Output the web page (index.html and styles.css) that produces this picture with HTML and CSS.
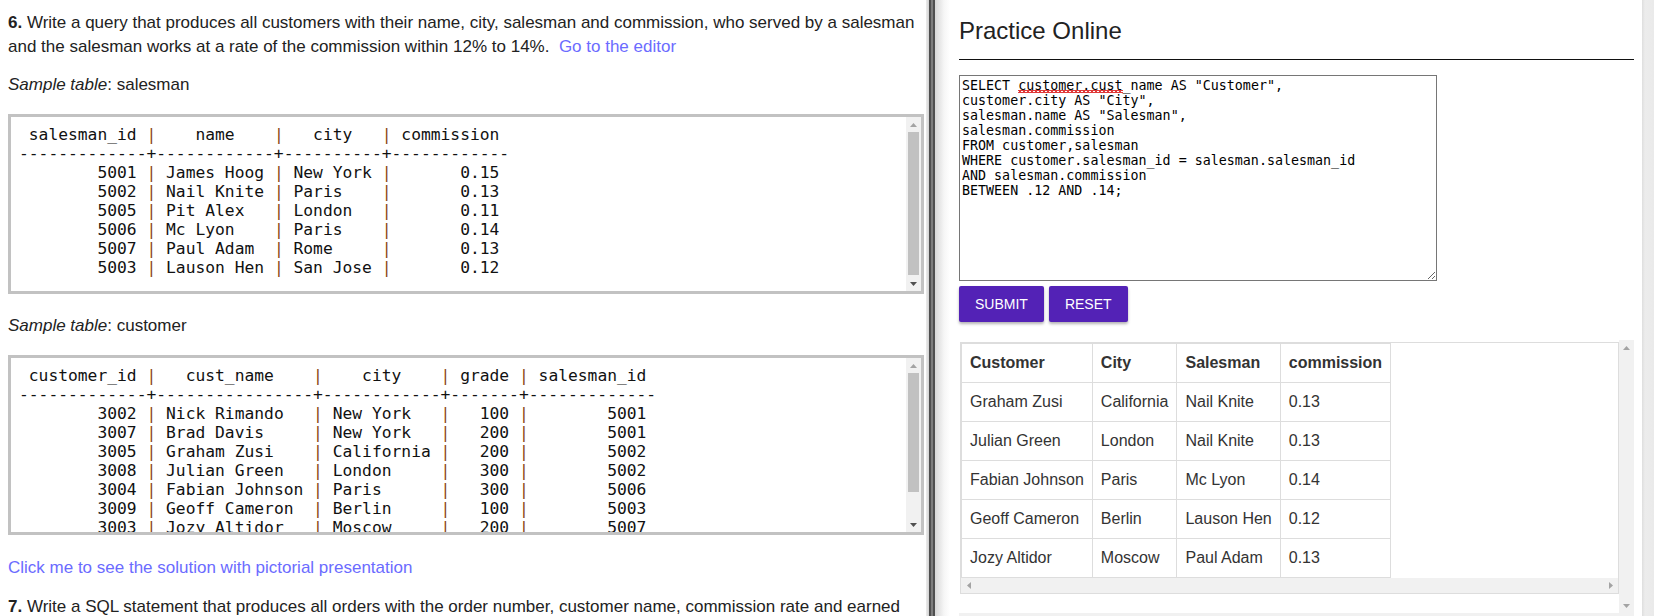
FILE: index.html
```html
<!DOCTYPE html>
<html lang="en">
<head>
<meta charset="utf-8">
<title>SQL exercise</title>
<link rel="stylesheet" href="styles.css">
</head>
<body>
<div class="page">
  <main class="left">
    <p class="q"><b>6.</b> Write a query that produces all customers with their name, city, salesman and commission, who served by a salesman and the salesman works at a rate of the commission within 12% to 14%.&nbsp; <a href="#" class="lnk">Go to the editor</a></p>
    <p class="sample first"><i>Sample table</i>: salesman</p>
    <div class="tbl-box">
      <pre class="tbl"> salesman_id <span class="p">|</span>    name    <span class="p">|</span>   city   <span class="p">|</span> commission
-------------+------------+----------+------------
        5001 <span class="p">|</span> James Hoog <span class="p">|</span> New York <span class="p">|</span>       0.15
        5002 <span class="p">|</span> Nail Knite <span class="p">|</span> Paris    <span class="p">|</span>       0.13
        5005 <span class="p">|</span> Pit Alex   <span class="p">|</span> London   <span class="p">|</span>       0.11
        5006 <span class="p">|</span> Mc Lyon    <span class="p">|</span> Paris    <span class="p">|</span>       0.14
        5007 <span class="p">|</span> Paul Adam  <span class="p">|</span> Rome     <span class="p">|</span>       0.13
        5003 <span class="p">|</span> Lauson Hen <span class="p">|</span> San Jose <span class="p">|</span>       0.12
</pre>
      <div class="vbar">
        <span class="arrow dis"><svg width="7" height="4" viewBox="0 0 7 4"><polygon points="0,4 7,4 3.5,0"/></svg></span>
        <span class="track"><span class="thumb" style="height:143px"></span></span>
        <span class="arrow"><svg width="7" height="4" viewBox="0 0 7 4"><polygon points="0,0 7,0 3.5,4"/></svg></span>
      </div>
    </div>
    <p class="sample second"><i>Sample table</i>: customer</p>
    <div class="tbl-box">
      <pre class="tbl"> customer_id <span class="p">|</span>   cust_name    <span class="p">|</span>    city    <span class="p">|</span> grade <span class="p">|</span> salesman_id
-------------+----------------+------------+-------+-------------
        3002 <span class="p">|</span> Nick Rimando   <span class="p">|</span> New York   <span class="p">|</span>   100 <span class="p">|</span>        5001
        3007 <span class="p">|</span> Brad Davis     <span class="p">|</span> New York   <span class="p">|</span>   200 <span class="p">|</span>        5001
        3005 <span class="p">|</span> Graham Zusi    <span class="p">|</span> California <span class="p">|</span>   200 <span class="p">|</span>        5002
        3008 <span class="p">|</span> Julian Green   <span class="p">|</span> London     <span class="p">|</span>   300 <span class="p">|</span>        5002
        3004 <span class="p">|</span> Fabian Johnson <span class="p">|</span> Paris      <span class="p">|</span>   300 <span class="p">|</span>        5006
        3009 <span class="p">|</span> Geoff Cameron  <span class="p">|</span> Berlin     <span class="p">|</span>   100 <span class="p">|</span>        5003
        3003 <span class="p">|</span> Jozy Altidor   <span class="p">|</span> Moscow     <span class="p">|</span>   200 <span class="p">|</span>        5007
        3001 <span class="p">|</span> Brad Guzan     <span class="p">|</span> London     <span class="p">|</span>       <span class="p">|</span>        5005
</pre>
      <div class="vbar">
        <span class="arrow dis"><svg width="7" height="4" viewBox="0 0 7 4"><polygon points="0,4 7,4 3.5,0"/></svg></span>
        <span class="track"><span class="thumb" style="height:119px"></span></span>
        <span class="arrow"><svg width="7" height="4" viewBox="0 0 7 4"><polygon points="0,0 7,0 3.5,4"/></svg></span>
      </div>
    </div>
    <p class="solution"><a href="#" class="lnk">Click me to see the solution with pictorial presentation</a></p>
    <p class="q next"><b>7.</b> Write a SQL statement that produces all orders with the order number, customer name, commission rate and earned commission amount for those customers who carry their grade is 200 or more and served by an existing salesman.</p>
  </main>

  <div class="divider"></div>

  <section class="right">
    <h2 class="title">Practice Online</h2>
    <hr class="rule">
    <div class="editor">SELECT <span class="typo">customer.cust</span>_name AS "Customer",
customer.city AS "City",
salesman.name AS "Salesman",
salesman.commission
FROM customer,salesman
WHERE customer.salesman_id = salesman.salesman_id
AND salesman.commission
BETWEEN .12 AND .14;</div>
    <div class="btns">
      <button class="btn" type="button">SUBMIT</button>
      <button class="btn" type="button">RESET</button>
    </div>
    <div class="result">
      <div class="result-view">
        <div class="resp">
          <table class="res-table">
            <tr><th>Customer</th><th>City</th><th>Salesman</th><th>commission</th></tr>
            <tr><td>Graham Zusi</td><td>California</td><td>Nail Knite</td><td>0.13</td></tr>
            <tr><td>Julian Green</td><td>London</td><td>Nail Knite</td><td>0.13</td></tr>
            <tr><td>Fabian Johnson</td><td>Paris</td><td>Mc Lyon</td><td>0.14</td></tr>
            <tr><td>Geoff Cameron</td><td>Berlin</td><td>Lauson Hen</td><td>0.12</td></tr>
            <tr><td>Jozy Altidor</td><td>Moscow</td><td>Paul Adam</td><td>0.13</td></tr>
          </table>
          <div class="hbar">
            <span class="arrow dis"><svg width="4" height="7" viewBox="0 0 4 7"><polygon points="4,0 4,7 0,3.5"/></svg></span>
            <span class="track"></span>
            <span class="arrow dis"><svg width="4" height="7" viewBox="0 0 4 7"><polygon points="0,0 0,7 4,3.5"/></svg></span>
          </div>
        </div>
      </div>
      <div class="vbar">
        <span class="arrow dis"><svg width="7" height="4" viewBox="0 0 7 4"><polygon points="0,4 7,4 3.5,0"/></svg></span>
        <span class="track"></span>
        <span class="arrow dis"><svg width="7" height="4" viewBox="0 0 7 4"><polygon points="0,0 7,0 3.5,4"/></svg></span>
      </div>
      <div class="hbar-outer"></div>
      <div class="corner"></div>
    </div>
  </section>

  <div class="rscroll"></div>
</div>
</body>
</html>
```

FILE: styles.css
```css
* { box-sizing: border-box; }

html, body {
  margin: 0;
  height: 616px;
  overflow: hidden;
  background: #fff;
}

body {
  font-family: "Liberation Sans", Arial, sans-serif;
  color: #222;
}

.page {
  display: flex;
  height: 616px;
}

/* ---------- left column ---------- */
.left {
  flex: none;
  width: 926px;
  padding: 11px 0 0 8px;
  font-size: 17px;
  line-height: 24px;
  overflow: hidden;
}

.left p { margin: 0; }

.left .sample.first { margin-top: 14px; }
.left .sample.second { margin-top: 20px; }
.left .solution { margin-top: 21px; }
.left .q.next { margin-top: 15px; }

.lnk {
  color: #6b6bff;
  text-decoration: none;
}

.tbl-box {
  display: flex;
  margin: 17px 2px 0 0;
  height: 180px;
  border: 3px solid #c2c2c2;
  background: #fff;
}

.tbl {
  flex: 1;
  margin: 0;
  padding: 8px 0 0 8px;
  overflow: hidden;
  font-family: "DejaVu Sans Mono", monospace;
  font-size: 16.3px;
  line-height: 19px;
  color: #111;
}

.tbl .p { color: #8b4513; }

/* ---------- fake classic scrollbars ---------- */
.vbar {
  flex: none;
  width: 15px;
  display: flex;
  flex-direction: column;
  background: #f1f1f1;
}

.hbar {
  height: 15px;
  display: flex;
  background: #f1f1f1;
}

.arrow {
  flex: none;
  width: 15px;
  height: 15px;
  display: flex;
  align-items: center;
  justify-content: center;
  fill: #505050;
}

.arrow svg { display: block; }

.arrow.dis { fill: #a3a3a3; }

.track {
  flex: 1;
  display: flex;
  flex-direction: column;
  padding: 0 2px;
}

.thumb {
  flex: none;
  background: #c1c1c1;
}

/* ---------- divider ---------- */
.divider {
  flex: none;
  width: 24px;
  background: linear-gradient(to right,
    #ececec 0, #d2d2d2 3px,
    #4e4e4e 3px, #4e4e4e 5px,
    #7c7c7c 5px, #7c7c7c 7px,
    #4e4e4e 7px, #4e4e4e 9px,
    #d6d6d6 9px, #f6f6f6 18px, #fff 24px);
}

/* ---------- right column ---------- */
.right {
  flex: none;
  width: 692px;
  padding: 0 8px 0 9px;
  overflow: hidden;
}

.title {
  margin: 17px 0 0;
  font-size: 24px;
  line-height: 28px;
  font-weight: normal;
  color: #222;
}

.rule {
  margin: 14px 0 0;
  border: 0;
  height: 1px;
  background: #111;
}

.editor {
  margin-top: 15px;
  width: 478px;
  height: 206px;
  border: 1px solid #767676;
  padding: 2px;
  font-family: "DejaVu Sans Mono", monospace;
  font-size: 13.333px;
  line-height: 15px;
  white-space: pre;
  color: #000;
  overflow: auto;
  resize: both;
}

.typo {
  background-image:
    linear-gradient(45deg, transparent 38%, #e03a3a 38%, #e03a3a 62%, transparent 62%),
    linear-gradient(-45deg, transparent 38%, #e03a3a 38%, #e03a3a 62%, transparent 62%);
  background-size: 4px 3px;
  background-repeat: repeat-x;
  background-position: 0 12px;
}

.btns {
  display: flex;
  gap: 5px;
  margin-top: 5px;
}

.btn {
  height: 36px;
  padding: 0 16px;
  border: 0;
  border-radius: 2px;
  background: #5322b6;
  color: #fff;
  font-family: "Liberation Sans", Arial, sans-serif;
  font-size: 14px;
  box-shadow: 0 2px 3px rgba(0, 0, 0, 0.3);
}

.result {
  margin-top: 18px;
  width: 675px;
  height: 288px;
  display: grid;
  grid-template-columns: 1fr 15px;
  grid-template-rows: 273px 15px;
}

.result-view {
  padding: 2px 0 0 1px;
  overflow: hidden;
}

.result .vbar { width: auto; }

.hbar-outer, .corner { background: #f1f1f1; }

.resp {
  border: 1px solid #ddd;
}

.res-table {
  border-collapse: collapse;
  font-size: 16px;
  line-height: 22px;
  color: #333;
}

.res-table th,
.res-table td {
  border: 1px solid #ddd;
  padding: 8px;
  text-align: left;
  white-space: nowrap;
}

.res-table th { font-weight: bold; }

/* ---------- outer right strip ---------- */
.rscroll {
  flex: none;
  width: 12px;
  background: linear-gradient(to right, #dedede 0, #ececec 3px, #eaeaea 100%);
}
```
